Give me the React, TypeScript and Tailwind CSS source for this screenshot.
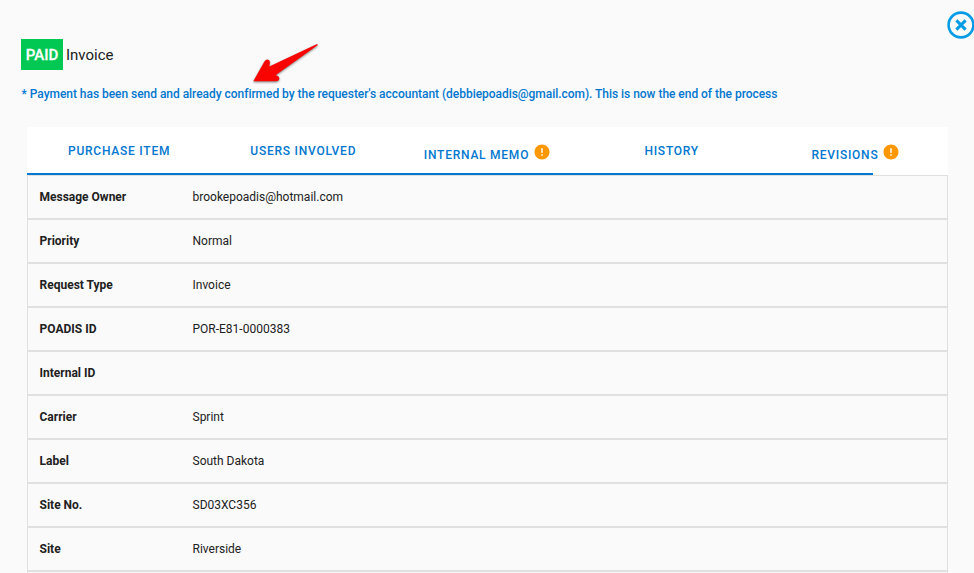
const rows: [string, string][] = [
  ["Message Owner", "brookepoadis@hotmail.com"],
  ["Priority", "Normal"],
  ["Request Type", "Invoice"],
  ["POADIS ID", "POR-E81-0000383"],
  ["Internal ID", ""],
  ["Carrier", "Sprint"],
  ["Label", "South Dakota"],
  ["Site No.", "SD03XC356"],
  ["Site", "Riverside"],
  ["", ""],
];

const tabs: { label: string; alert?: boolean }[] = [
  { label: "PURCHASE ITEM" },
  { label: "USERS INVOLVED" },
  { label: "INTERNAL MEMO", alert: true },
  { label: "HISTORY" },
  { label: "REVISIONS", alert: true },
];

function AlertIcon() {
  return (
    <svg className="ml-[4px] mt-[2px] size-[18px]" viewBox="0 0 24 24" fill="#ff9800">
      <path d="M12 2C6.48 2 2 6.48 2 12s4.48 10 10 10 10-4.48 10-10S17.52 2 12 2zm1 15h-2v-2h2v2zm0-4h-2V7h2v6z" />
    </svg>
  );
}

function Arrow() {
  return (
    <svg className="absolute left-[248px] top-[40px] h-[46px] w-[76px] drop-shadow-[0_1px_1px_rgba(0,0,0,0.5)]" viewBox="0 0 76 46" fill="#f90400">
      <path d="M5.3 41.3 L16.6 21.3 Q18.4 18.6 20.8 20 Q22.2 21 21.8 23.2 L21.3 26.4 L68.6 4.2 Q70.8 4 69.2 5.6 L28.5 34.5 Q27.5 35.6 29.2 35.8 Q31.8 36.8 31.2 39.2 Q30.6 41.2 28 41.2 Z" />
    </svg>
  );
}

export default function App() {
  return (
    <div className="relative h-[573px] w-[974px] overflow-hidden bg-[#fafafa] pt-[39px] font-[Roboto,sans-serif] text-[#212121]">
      <button className="absolute left-[947px] top-[11px] size-[28px]" aria-label="Close">
        <svg viewBox="0 0 28 28" fill="none" stroke="#039be5">
          <circle cx="14" cy="14" r="12.4" strokeWidth="2.6" />
          <path d="M9.4 9.4l9.2 9.2M18.6 9.4l-9.2 9.2" strokeWidth="3" />
        </svg>
      </button>
      <header className="ml-[21px] flex h-[31px] items-center text-[15px]">
        <span className="flex h-[31px] w-[42px] items-center justify-center bg-[#00c853] pt-[2px] font-medium text-white [-webkit-text-stroke:0.3px_white]">PAID</span>
        <span className="ml-[3px] pt-[2px]">Invoice</span>
      </header>
      <p className="ml-[21.5px] mt-[15px] h-[18px] whitespace-nowrap text-[12px] font-medium leading-[18px] tracking-[-0.036px] text-[#0277cf]">
        * Payment has been send and already confirmed by the requester's accountant (debbiepoadis@gmail.com). This is now the end of the process
      </p>
      <Arrow />
      <main className="ml-[27px] mt-[24px] w-[921px]">
        <nav className="relative grid h-[48px] grid-cols-5 bg-white text-[12px] font-medium tracking-[0.76px] text-[#0277cf]">
          {tabs.map((t) => (
            <a key={t.label} className="flex h-[48px] items-center justify-center whitespace-nowrap">
              <span className={t.alert ? "pt-[7px]" : ""}>{t.label}</span>
              {t.alert && <AlertIcon />}
            </a>
          ))}
          <i className="absolute bottom-0 left-0 h-[2px] w-[846px] bg-[#0277cf]" />
        </nav>
        <dl>
          {rows.map(([k, v], i) => (
            <div key={i} className="flex h-[44px] items-center border border-[#e0e0e0] pl-[11.5px] text-[12px]">
              <dt className="w-[153px] font-bold">{k}</dt>
              <dd>{v}</dd>
            </div>
          ))}
        </dl>
      </main>
    </div>
  );
}
